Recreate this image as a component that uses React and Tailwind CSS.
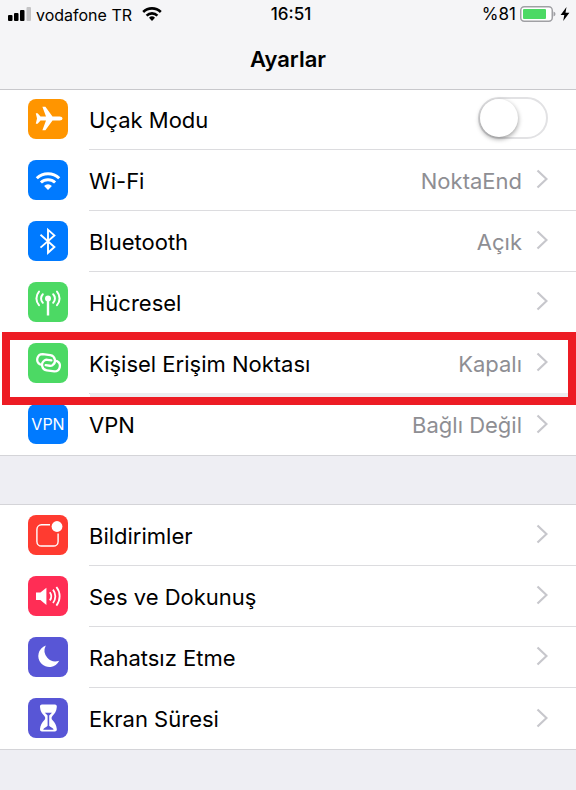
import { useState } from "react";

function PlaneIcon() {
  return (
    <path
      fill="#fff"
      d="M34.5 19.5c0 1.3-1.2 2-2.8 2h-7.2L17.4 31.3h-3L18 21.5h-5.5L9.6 24.8H7.8l1.2-5.3-1.2-5.3h1.8l2.9 3.3H18L14.4 7.7h3l7.1 9.8h7.2c1.6 0 2.8.7 2.8 2Z"
    />
  );
}

function WifiIcon() {
  return (
    <g fill="none" stroke="#fff" strokeWidth="3">
      <path d="M8.8 18.2a16 16 0 0 1 22.4 0" />
      <path d="M12.9 22.5a10.3 10.3 0 0 1 14.2 0" />
      <path fill="#fff" stroke="none" d="M20 30l-3.9-4.1a5.6 5.6 0 0 1 7.8 0Z" />
    </g>
  );
}

function BluetoothIcon() {
  return (
    <path fill="none" stroke="#fff" strokeWidth="1.9" d="M12.5 13.8 26.4 26l-6.400 5.800V8.800l6.400 5.600L12.500 26.600" />
  );
}

function CellularIcon() {
  return (
    <g fill="none" stroke="#fff" strokeWidth="2" strokeLinecap="round">
      <circle cx="20" cy="16.5" r="3" fill="#fff" stroke="none" />
      <path strokeWidth="2.4" strokeLinecap="butt" d="M20 17v16.500" />
      <path d="M14.800 12.200a6.200 6.200 0 0 0 0 8.600M25.200 12.200a6.200 6.200 0 0 1 0 8.600" />
      <path d="M11 9.600a10.300 10.300 0 0 0 0 13.600M29 9.600a10.300 10.300 0 0 1 0 13.600" />
    </g>
  );
}

function HotspotIcon() {
  return (
    <g fill="none" stroke="#fff" strokeWidth="2.300" strokeLinecap="round" transform="rotate(8 20 20)">
      <path d="M12.600 22.600a5.500 5.500 0 0 1 1-10.700h7.600a5.500 5.500 0 0 1 3.600 9.600q-1.200 1-2.800 1h-4" />
      <path d="M28.400 16.800a5.500 5.500 0 0 1-1 10.700h-7.600a5.500 5.500 0 0 1-3.600-9.600q1.200-1 2.800-1h4" />
    </g>
  );
}

function NotificationsIcon() {
  return (
    <g>
      <path
        fill="none"
        stroke="#fff"
        strokeWidth="1.4"
        d="M22 9.8h-8.5a4.6 4.6 0 0 0-4.6 4.6v12a4.6 4.6 0 0 0 4.6 4.6h12a4.6 4.6 0 0 0 4.6-4.6V18.500"
      />
      <circle cx="29" cy="11.5" r="5.4" fill="#fff" />
    </g>
  );
}

function SoundIcon() {
  return (
    <g fill="none" stroke="#fff" strokeWidth="1.8">
      <path fill="#fff" stroke="none" d="M8 16.5h4.4l6-4.8v17.2l-6-4.8H8Z" />
      <path d="M21.8 16.2a6.8 6.8 0 0 1 0 8.2" />
      <path d="M25 13.6a10.8 10.8 0 0 1 0 13.4" />
      <path d="M28.4 11a15 15 0 0 1 0 18.6" />
    </g>
  );
}

function MoonIcon() {
  return (
    <path fill="#fff" d="M17.8 8.6A11 11 0 1 0 31.2 23.8 10.9 10.9 0 0 1 17.8 8.6Z" />
  );
}

function HourglassIcon() {
  return (
    <g>
      <path
        fill="#fff"
        d="M14 6.500h12.800c1.500 0 2.200 1 2 2.500-.4 4.500-2 6.500-4.200 8.800-1.400 1.500-1.400 3 0 4.500 2.200 2.300 3.800 4.500 4.200 8.700.2 1.500-.5 2.500-2 2.500H14c-1.500 0-2.200-1-2-2.500.4-4.200 2-6.400 4.200-8.700 1.400-1.500 1.400-3 0-4.500C14 15.500 12.400 13.500 12 9c-.2-1.500.5-2.500 2-2.500Z"
      />
      <path
        fill="#5856d6"
        d="M16.800 14.800h7.200l-2.800 2.700v10.300c.6 1.200 3 1.600 4.200 3.200v.8h-10V31c1.200-1.600 3.600-2 4.200-3.200V17.500Z"
      />
    </g>
  );
}

function VpnIcon() {
  return <span className="text-base text-white">VPN</span>;
}

const CONNECTIONS = [
  { label: "Wi-Fi", value: "NoktaEnd", color: "bg-[#007aff]", Glyph: WifiIcon },
  { label: "Bluetooth", value: "Açık", color: "bg-[#007aff]", Glyph: BluetoothIcon },
  { label: "Hücresel", color: "bg-[#4cd964]", Glyph: CellularIcon },
  { label: "Kişisel Erişim Noktası", value: "Kapalı", color: "bg-[#4cd964]", Glyph: HotspotIcon, highlighted: true },
  { label: "VPN", value: "Bağlı Değil", color: "bg-[#007aff]", Glyph: VpnIcon, textGlyph: true },
];

const ALERTS = [
  { label: "Bildirimler", color: "bg-[#ff3b30]", Glyph: NotificationsIcon },
  { label: "Ses ve Dokunuş", color: "bg-[#ff2d55]", Glyph: SoundIcon },
  { label: "Rahatsız Etme", color: "bg-[#5856d6]", Glyph: MoonIcon },
  { label: "Ekran Süresi", color: "bg-[#5856d6]", Glyph: HourglassIcon },
];

function Tile({ color, Glyph, textGlyph }) {
  return (
    <span className={`mb-0.5 flex size-10 shrink-0 items-center justify-center rounded-lg ${color}`}>
      {textGlyph ? (
        <Glyph />
      ) : (
        <svg viewBox="0 0 40 40" className="size-10" aria-hidden="true">
          <Glyph />
        </svg>
      )}
    </span>
  );
}

function Row({ item, last }) {
  return (
    <li className="relative">
      <a href="#" className="flex h-[61px] items-center gap-[21px] pl-7">
        <Tile {...item} />
        <span className={`flex h-full min-w-0 flex-1 items-center pr-7 ${last ? "" : "border-b border-[#dcdcdf]"}`}>
          <span className="flex-1 truncate pt-0.5">{item.label}</span>
          {item.value && <span className="pt-0.5 text-[#8e8e93]">{item.value}</span>}
          <svg viewBox="0 0 12 20" className="mb-0.5 ml-3.5 h-5 w-3 shrink-0" aria-hidden="true">
            <path d="M1.500 1.500 10.500 10l-9 8.500" fill="none" stroke="#c7c7cc" strokeWidth="2.200" />
          </svg>
        </span>
      </a>
      {item.highlighted && (
        <div className="pointer-events-none absolute -top-px right-0 -bottom-[11px] left-0.5 z-10 flex items-end border-8 border-[#ed1c24]">
          <div className="ml-20 h-1 flex-1 bg-[#ededf0]" />
        </div>
      )}
    </li>
  );
}

function StatusBar() {
  return (
    <div className="grid h-[30px] grid-cols-3 items-center pr-1.5 pl-2 text-[17px]">
      <div className="flex items-center gap-1 text-base whitespace-nowrap">
        <svg viewBox="0 0 24 14" className="mb-0.5 h-3.5 w-6 shrink-0" aria-hidden="true">
          <rect x="0" y="8" width="4.500" height="6" rx="1" />
          <rect x="6" y="6" width="4.500" height="8" rx="1" />
          <rect x="12" y="3" width="4.500" height="11" rx="1" />
          <rect x="18.500" y="0" width="4.500" height="14" rx="1" fill="#c4c4c6" />
        </svg>
        <span>vodafone TR</span>
        <svg viewBox="0 0 20 14" className="mb-0.5 ml-1.5 h-3.5 w-5 shrink-0" aria-hidden="true">
          <g fill="none" stroke="#000" strokeWidth="2.600">
            <path d="M1.200 5a12.600 12.600 0 0 1 17.600 0" />
            <path d="M4.600 8.600a7.700 7.700 0 0 1 10.800 0" />
          </g>
          <path d="M10 14l-3-3.200a4.300 4.300 0 0 1 6 0Z" />
        </svg>
      </div>
      <time className="pl-1 text-center font-medium">16:51</time>
      <div className="flex items-center justify-end gap-1">
        <span>%81</span>
        <svg viewBox="0 0 36 16" className="mb-0.5 h-4 w-9" aria-hidden="true">
          <rect x=".75" y=".75" width="31.500" height="14.500" rx="3.500" fill="#fff" stroke="#a0a0a4" strokeWidth="1.500" />
          <rect x="3" y="3" width="23" height="10" rx="1" fill="#4cd964" />
          <path d="M33.500 5.500q2 .7 2 2.500t-2 2.500Z" fill="#a0a0a4" />
        </svg>
        <svg viewBox="0 0 10 14" className="mb-0.5 h-3.5 w-2.5" aria-hidden="true">
          <path d="M6.500 0 .6 8h3.700L3.200 14l6.200-8.300H5.500Z" />
        </svg>
      </div>
    </div>
  );
}

export default function App() {
  const [airplane, setAirplane] = useState(false);

  return (
    <div className="min-h-screen bg-[#eeeef3] font-['Inter','Liberation_Sans',sans-serif] text-[22px] text-black">
      <header className="sticky top-0 z-20 h-[90px] border-b border-[#c8c8cc] bg-[#f5f5f7]">
        <StatusBar />
        <h1 className="pt-3 text-center leading-[34px] font-semibold">Ayarlar</h1>
      </header>

      <main className="-mt-px">
        <ul className="border-b border-[#d4d4d8] bg-white">
          <li className="flex h-[61px] items-center gap-[21px] pl-7">
            <Tile color="bg-[#ff9500]" Glyph={PlaneIcon} />
            <div className="flex h-full flex-1 items-center border-b border-[#dcdcdf] pr-7">
              <label htmlFor="airplane" className="flex-1 pt-0.5">
                Uçak Modu
              </label>
              <input
                id="airplane"
                type="checkbox"
                role="switch"
                checked={airplane}
                onChange={(e) => setAirplane(e.target.checked)}
                className="mb-0.5 h-[42px] w-[70px] appearance-none rounded-full border-2 border-[#e2e2e4] bg-white transition-colors before:block before:size-[38px] before:rounded-full before:bg-white before:shadow-[0_2px_5px_rgba(0,0,0,0.4)] before:transition-transform checked:border-[#4cd964] checked:bg-[#4cd964] checked:before:translate-x-7"
              />
            </div>
          </li>
          {CONNECTIONS.map((item, i) => (
            <Row key={item.label} item={item} last={i === CONNECTIONS.length - 1} />
          ))}
        </ul>

        <ul className="mt-12 border-y border-[#d4d4d8] bg-white">
          {ALERTS.map((item, i) => (
            <Row key={item.label} item={item} last={i === ALERTS.length - 1} />
          ))}
        </ul>
      </main>
    </div>
  );
}
